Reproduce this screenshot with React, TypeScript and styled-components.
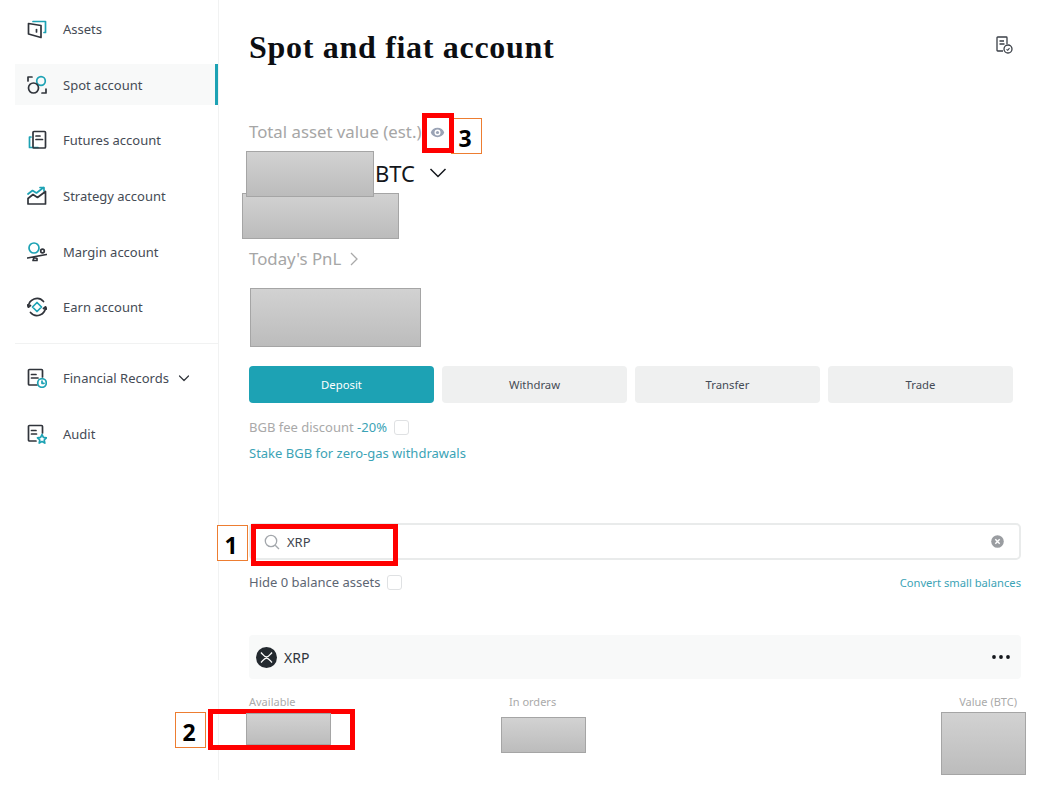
import React from "react";
import styled, { createGlobalStyle } from "styled-components";

const Global = createGlobalStyle`
  html, body { margin: 0; padding: 0; background: #fff; }
  body { font-family: "Noto Sans", "Open Sans", sans-serif; color: #2b2f36; }
  * { box-sizing: border-box; }
`;

const TEAL = "#1da2b4";
const DARK = "#30343b";

const Page = styled.div`
  position: relative;
  width: 1040px;
  height: 801px;
  overflow: hidden;
  display: flex;
  align-items: flex-start;
`;

const Sidebar = styled.aside`
  width: 219px;
  height: 780px;
  flex: none;
  border-right: 1px solid #f1f2f2;
  padding: 8.5px 0 0 15px;
  display: flex;
  flex-direction: column;
  gap: 14.7px;
`;

const NavItem = styled.div<{ $active?: boolean }>`
  height: 41px;
  display: flex;
  align-items: center;
  padding-left: 12px;
  gap: 16px;
  font-size: 13px;
  color: #454b55;
  background: ${(p) => (p.$active ? "#f8f9f9" : "transparent")};
  border-right: 3px solid ${(p) => (p.$active ? TEAL : "transparent")};
`;

const NavIcon = styled.svg`
  width: 20px;
  height: 20px;
  flex: none;
`;

const NavCaret = styled.svg`
  width: 12px;
  height: 12px;
  margin-left: -7px;
`;

const NavDivider = styled.hr`
  border: 0;
  height: 1px;
  margin: 0 0 -0.5px;
  background: #f1f2f2;
`;

const Main = styled.main`
  flex: 1;
  padding: 0 19px 0 30px;
  display: flex;
  flex-direction: column;
`;

const Header = styled.header`
  height: 48px;
  margin-top: 24px;
  display: flex;
  align-items: center;
  justify-content: space-between;
`;

const Title = styled.h1`
  margin: -1px 0 0;
  font-family: "Liberation Serif", serif;
  font-size: 32px;
  font-weight: 700;
  letter-spacing: 0.7px;
  color: #0c0e12;
`;

const HeaderIcon = styled.svg`
  width: 18px;
  height: 18px;
  margin: -6px 8px 0 0;
`;

const MutedLabel = styled.div`
  display: flex;
  align-items: center;
  font-size: 16.8px;
  line-height: 22px;
  color: #a6a6a6;
`;

const TotalLabel = styled(MutedLabel)`
  margin-top: 49px;
  gap: 9px;
`;

const BalanceRow = styled.div`
  height: 30px;
  margin-top: 15px;
  padding-left: 126px;
  display: flex;
  align-items: center;
  gap: 14px;
  font-size: 22px;
  color: #14171c;
`;

const PnlLabel = styled(MutedLabel)`
  margin-top: 60px;
  gap: 9px;
`;

const Actions = styled.div`
  margin-top: 96px;
  width: 764px;
  display: grid;
  grid-template-columns: repeat(4, 1fr);
  gap: 8px;
`;

const ActionButton = styled.button<{ $primary?: boolean }>`
  height: 37px;
  border: 0;
  border-radius: 4px;
  font-family: inherit;
  font-size: 11.3px;
  color: ${(p) => (p.$primary ? "#fff" : "#454b55")};
  background: ${(p) => (p.$primary ? TEAL : "#eff0f0")};
`;

const CheckRow = styled.div<{ $muted?: boolean }>`
  display: flex;
  align-items: center;
  gap: 7px;
  font-size: 13px;
  line-height: 18px;
  color: ${(p) => (p.$muted ? "#a9a9a9" : "#5d6673")};
`;

const DiscountRow = styled(CheckRow)`
  margin-top: 15px;
`;

const Teal = styled.span`
  color: #3ba3b6;
`;

const Box = styled.span`
  width: 15px;
  height: 15px;
  border: 1px solid #dfe1e3;
  border-radius: 3px;
  background: #fff;
`;

const StakeLink = styled.a`
  margin-top: 8px;
  font-size: 13px;
  line-height: 18px;
  color: #3ba3b6;
`;

const Search = styled.div`
  margin-top: 61px;
  height: 37px;
  border: 2px solid #e9ebeb;
  border-radius: 5px;
  display: flex;
  align-items: center;
  padding: 0 15px 0 13px;
  gap: 7px;
  font-size: 13px;
  color: #3e444e;
`;

const SearchValue = styled.span`
  flex: 1;
`;

const ToolRow = styled.div`
  margin-top: 13px;
  display: flex;
  align-items: center;
  justify-content: space-between;
`;

const ConvertLink = styled.a`
  font-size: 11.2px;
  color: #3ba3b6;
`;

const CoinHead = styled.div`
  margin-top: 44px;
  height: 44px;
  border-radius: 4px;
  background: #f8f9f9;
  display: flex;
  align-items: center;
  padding: 0 11px 0 7px;
  gap: 7px;
  font-size: 14px;
  color: #2f343c;
`;

const CoinName = styled.span`
  flex: 1;
`;

const ColumnHeads = styled.div`
  margin-top: 15px;
  padding-right: 4px;
  display: grid;
  grid-template-columns: 260px 1fr auto;
  font-size: 11px;
  line-height: 16px;
  color: #aaa;
`;

const Redaction = styled.div<{ $x: number; $y: number; $w: number; $h: number }>`
  position: absolute;
  left: ${(p) => p.$x}px;
  top: ${(p) => p.$y}px;
  width: ${(p) => p.$w}px;
  height: ${(p) => p.$h}px;
  border: 1px solid #a5a5a5;
  background: linear-gradient(#d2d2d2, #bcbcbc);
`;

const Highlight = styled.div<{ $x: number; $y: number; $w: number; $h: number }>`
  position: absolute;
  left: ${(p) => p.$x}px;
  top: ${(p) => p.$y}px;
  width: ${(p) => p.$w}px;
  height: ${(p) => p.$h}px;
  border: 5px solid #ff0000;
`;

const Callout = styled.div<{ $x: number; $y: number; $w: number; $h: number }>`
  position: absolute;
  left: ${(p) => p.$x}px;
  top: ${(p) => p.$y}px;
  width: ${(p) => p.$w}px;
  height: ${(p) => p.$h}px;
  border: 1px solid #ed7d31;
  background: #fff;
  display: flex;
  align-items: center;
  justify-content: center;
  padding: 3px 3px 0 0;
  font-size: 23px;
  font-weight: 700;
  color: #000;
`;

const s = { fill: "none", strokeWidth: 1.7, strokeLinecap: "round", strokeLinejoin: "round" } as const;

const AssetsIcon = () => (
  <NavIcon viewBox="0 0 20 20">
    <path {...s} stroke={TEAL} d="M6 2.500h12.500v11H17" />
    <path {...s} stroke={DARK} d="M1.500 4.500l12.500 2v12l-12.500-3.500z" />
    <path {...s} stroke={DARK} d="M9.500 10.500v2.500" />
  </NavIcon>
);
const SpotIcon = () => (
  <NavIcon viewBox="0 0 20 20">
    <path {...s} stroke={DARK} d="M1 6V2h4M19 14v4h-4" />
    <circle {...s} stroke={TEAL} cx="14" cy="6" r="4.300" />
    <circle {...s} stroke={DARK} cx="6.500" cy="13" r="5" />
  </NavIcon>
);
const FuturesIcon = () => (
  <NavIcon viewBox="0 0 20 20">
    <path {...s} stroke={TEAL} d="M4 7H2.500v10.500H11" />
    <rect {...s} stroke={DARK} x="6" y="1.500" width="12.500" height="16.500" rx="1" />
    <path {...s} stroke={DARK} d="M9 6h4M9 9.500h6.500" />
  </NavIcon>
);
const StrategyIcon = () => (
  <NavIcon viewBox="0 0 20 20">
    <path {...s} stroke={TEAL} d="M1 8l4.500-3.500 4 2.500 7-5.500M13 1.500h4V5" />
    <path {...s} stroke={DARK} d="M1 18V12.500l5-4 4.500 3 8-6V18z" />
  </NavIcon>
);
const MarginIcon = () => (
  <NavIcon viewBox="0 0 20 20">
    <circle {...s} stroke={TEAL} cx="7" cy="6" r="5" />
    <circle {...s} stroke={DARK} cx="15.500" cy="9" r="1.800" />
    <path {...s} stroke={DARK} d="M0.500 16l19-3.500M6 18.500l1-3 3 1v2z" />
  </NavIcon>
);
const EarnIcon = () => (
  <NavIcon viewBox="0 0 20 20">
    <path {...s} stroke={DARK} d="M1.500 10a8.500 8.500 0 0 1 15-5.500M18.500 10a8.500 8.500 0 0 1-15 5.500" />
    <path {...s} stroke={DARK} d="M0.500 8l1 2 2-1.500M19.500 12l-1-2-2 1.500" />
    <path {...s} stroke={TEAL} d="M10 5.500l4.500 4.500-4.500 4.500L5.500 10z" />
  </NavIcon>
);
const RecordsIcon = () => (
  <NavIcon viewBox="0 0 20 20">
    <path {...s} stroke={DARK} d="M10 17H2.500a1 1 0 0 1-1-1V2.500a1 1 0 0 1 1-1h12a1 1 0 0 1 1 1V9" />
    <path {...s} stroke={DARK} d="M4.500 6.500h4.500M4.500 10h6.500" />
    <circle {...s} stroke={TEAL} cx="15" cy="15" r="4.300" />
    <path {...s} stroke={TEAL} d="M15 13v2.300h2" />
  </NavIcon>
);
const AuditIcon = () => (
  <NavIcon viewBox="0 0 20 20">
    <path {...s} stroke={DARK} d="M9 17H2.500a1 1 0 0 1-1-1V2.500a1 1 0 0 1 1-1h12a1 1 0 0 1 1 1V9" />
    <path {...s} stroke={DARK} d="M4.500 6.500h4.500M4.500 10h5" />
    <path {...s} stroke={TEAL} d="M15 10.500l1.400 2.900 3.100.4-2.300 2.200.6 3.100-2.800-1.500-2.800 1.500.6-3.100-2.300-2.200 3.100-.4z" />
  </NavIcon>
);

const nav = [
  { label: "Assets", icon: <AssetsIcon /> },
  { label: "Spot account", icon: <SpotIcon />, active: true },
  { label: "Futures account", icon: <FuturesIcon /> },
  { label: "Strategy account", icon: <StrategyIcon /> },
  { label: "Margin account", icon: <MarginIcon /> },
  { label: "Earn account", icon: <EarnIcon /> },
];

export default function App() {
  return (
    <Page>
      <Global />
      <Sidebar>
        {nav.map((n) => (
          <NavItem key={n.label} $active={n.active}>
            {n.icon}
            {n.label}
          </NavItem>
        ))}
        <NavDivider />
        <NavItem>
          <RecordsIcon />
          Financial Records
          <NavCaret viewBox="0 0 12 12">
            <path {...s} stroke={DARK} strokeWidth={1.2} d="M1.500 4l4.500 4.500L10.500 4" />
          </NavCaret>
        </NavItem>
        <NavItem>
          <AuditIcon />
          Audit
        </NavItem>
      </Sidebar>

      <Main>
        <Header>
          <Title>Spot and fiat account</Title>
          <HeaderIcon viewBox="0 0 18 18">
            <path fill="none" stroke="#3a3f47" strokeWidth="1.300" d="M8 15H2.700a.7.7 0 0 1-.7-.7V1.700A.7.7 0 0 1 2.700 1h8.600a.7.7 0 0 1 .7.7V8" />
            <path fill="none" stroke="#3a3f47" strokeWidth="1.300" d="M4.500 5h4.500M4.500 8h5" />
            <circle fill="none" stroke="#3a3f47" strokeWidth="1.300" cx="13" cy="13" r="4" />
            <path fill="none" stroke="#3a3f47" strokeWidth="1.100" d="M11.500 13.300l1.200 1 1.800-2.200" />
          </HeaderIcon>
        </Header>

        <TotalLabel>
          Total asset value (est.)
          <svg width="15" height="15" viewBox="0 0 16 16">
            <path fill="#9aa3b5" d="M8 3C4.600 3 1.800 5.100.8 8c1 2.900 3.800 5 7.200 5s6.200-2.100 7.200-5C14.200 5.100 11.400 3 8 3zm0 8.200A3.200 3.200 0 1 1 8 4.800a3.200 3.200 0 0 1 0 6.400z" />
            <circle fill="#9aa3b5" cx="8" cy="8" r="1.700" />
          </svg>
        </TotalLabel>
        <BalanceRow>
          BTC
          <svg width="18" height="18" viewBox="0 0 18 18">
            <path fill="none" stroke="#14171c" strokeWidth="1.500" d="M1.500 5l7.500 7.500L16.500 5" />
          </svg>
        </BalanceRow>
        <PnlLabel>
          Today's PnL
          <svg width="8" height="14" viewBox="0 0 8 14">
            <path fill="none" stroke="#a9a9a9" strokeWidth="1.300" d="M1 1l6 6-6 6" />
          </svg>
        </PnlLabel>

        <Actions>
          <ActionButton $primary>Deposit</ActionButton>
          <ActionButton>Withdraw</ActionButton>
          <ActionButton>Transfer</ActionButton>
          <ActionButton>Trade</ActionButton>
        </Actions>

        <DiscountRow $muted>
          <span>
            BGB fee discount <Teal>-20%</Teal>
          </span>
          <Box />
        </DiscountRow>
        <StakeLink>Stake BGB for zero-gas withdrawals</StakeLink>

        <Search>
          <svg width="16" height="16" viewBox="0 0 16 16">
            <circle fill="none" stroke="#a3a7ac" strokeWidth="1.300" cx="7" cy="7" r="5.700" />
            <path fill="none" stroke="#a3a7ac" strokeWidth="1.300" d="M11.200 11.200L15 15" />
          </svg>
          <SearchValue>XRP</SearchValue>
          <svg width="13" height="13" viewBox="0 0 13 13">
            <circle fill="#9a9da1" cx="6.500" cy="6.500" r="6.300" />
            <path fill="none" stroke="#fff" strokeWidth="1.400" d="M4.300 4.300l4.400 4.400M8.700 4.300l-4.400 4.400" />
          </svg>
        </Search>

        <ToolRow>
          <CheckRow>
            Hide 0 balance assets
            <Box />
          </CheckRow>
          <ConvertLink>Convert small balances</ConvertLink>
        </ToolRow>

        <CoinHead>
          <svg width="21" height="21" viewBox="0 0 21 21">
            <circle fill="#23292f" cx="10.500" cy="10.500" r="10.500" />
            <path fill="none" stroke="#fff" strokeWidth="1.400" d="M5 5.500c2 2 3.300 4.400 5.500 4.400s3.500-2.400 5.500-4.400M5 15.500c2-2 3.300-4.400 5.500-4.400s3.500 2.400 5.500 4.400" />
          </svg>
          <CoinName>XRP</CoinName>
          <svg width="18" height="4" viewBox="0 0 18 4">
            <circle fill="#14171c" cx="2" cy="2" r="1.900" />
            <circle fill="#14171c" cx="9" cy="2" r="1.900" />
            <circle fill="#14171c" cx="16" cy="2" r="1.900" />
          </svg>
        </CoinHead>

        <ColumnHeads>
          <span>Available</span>
          <span>In orders</span>
          <span>Value (BTC)</span>
        </ColumnHeads>
      </Main>

      <Redaction $x={242} $y={193} $w={157} $h={46} />
      <Redaction $x={246} $y={151} $w={128} $h={46} />
      <Redaction $x={250} $y={288} $w={171} $h={59} />
      <Highlight $x={208} $y={709} $w={147} $h={41} />
      <Redaction $x={246} $y={713} $w={85} $h={32} />
      <Redaction $x={501} $y={717} $w={85} $h={36} />
      <Redaction $x={941} $y={712} $w={85} $h={63} />
      <Callout $x={451} $y={118} $w={31} $h={36}>3</Callout>
      <Callout $x={217} $y={525} $w={31} $h={36}>1</Callout>
      <Callout $x={175} $y={712} $w={31} $h={36}>2</Callout>
      <Highlight $x={422} $y={113} $w={32} $h={40} />
      <Highlight $x={251} $y={524} $w={147} $h={42} />
    </Page>
  );
}
